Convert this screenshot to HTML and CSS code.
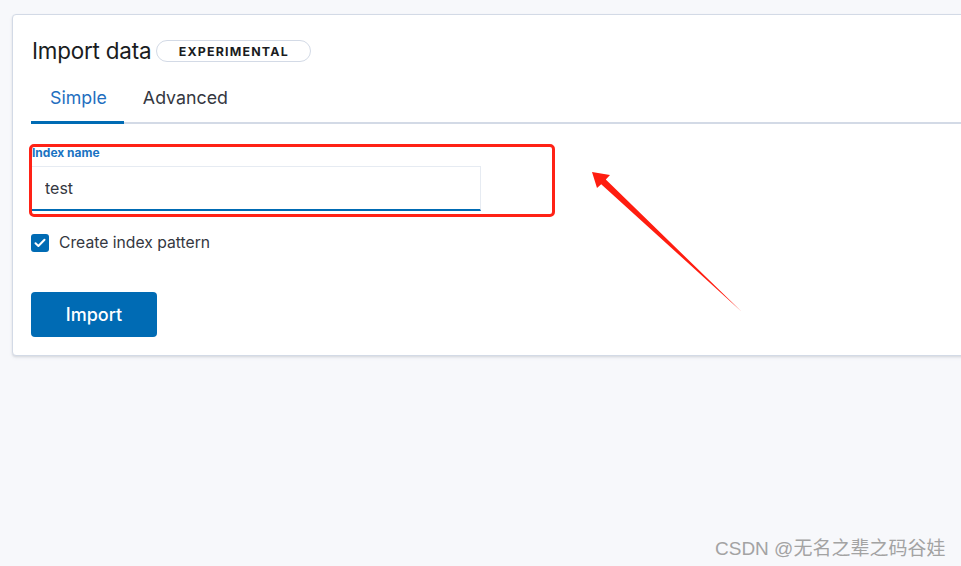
FILE: index.html
```html
<!DOCTYPE html>
<html lang="en">
<head>
<meta charset="utf-8">
<title>Import data</title>
<link rel="stylesheet" href="styles.css">
</head>
<body>
<div class="page">
  <section class="card">
    <header class="title-row">
      <h1 class="title">Import data</h1>
      <span class="badge">EXPERIMENTAL</span>
    </header>
    <nav class="tabs">
      <button class="tab active">Simple</button>
      <button class="tab">Advanced</button>
    </nav>
    <form class="form">
      <label class="field-label" for="index-name">Index name</label>
      <input id="index-name" class="field" type="text" value="test">
      <label class="check-row">
        <span class="checkbox">
          <svg width="12" height="10" viewBox="0 0 12 10"><path d="M1.5 5.2 4.4 8 10.5 1.8" fill="none" stroke="#fff" stroke-width="2" stroke-linecap="round" stroke-linejoin="round"/></svg>
        </span>
        <span class="check-text">Create index pattern</span>
      </label>
      <button type="button" class="import-btn">Import</button>
    </form>
  </section>
  <div class="highlight"></div>
  <svg class="arrow" width="961" height="566" viewBox="0 0 961 566">
    <polygon points="592,172 610,175 605.8,179.6 742,312 601.2,184.2 597,188" fill="#ff1d10"/>
  </svg>
  <div class="watermark">CSDN @无名之辈之码谷娃</div>
</div>
</body>
</html>
```

FILE: styles.css
```css
html, body {
  margin: 0;
  padding: 0;
}
body {
  background: #f7f8fb;
  font-family: Inter, "Noto Sans", sans-serif;
  overflow: hidden;
}
.page {
  position: relative;
  width: 961px;
  height: 566px;
  overflow: hidden;
}
.card {
  margin: 14px 0 0 12px;
  width: 1000px;
  background: #fff;
  border: 1px solid #d3dae6;
  border-radius: 4px;
  box-shadow: 0 1px 2px rgba(0,0,0,0.08), 0 2px 3px rgba(152,162,179,0.15);
  padding: 21px 0 18px 18px;
  box-sizing: border-box;
}
.title-row {
  display: flex;
  align-items: center;
  gap: 5px;
  height: 30px;
}
.title {
  margin: 0 0 0 1px;
  font-size: 22.4px;
  font-weight: 400;
  color: #1a1c21;
  letter-spacing: -0.2px;
  line-height: 30px;
}
.badge {
  display: inline-flex;
  align-items: center;
  justify-content: center;
  height: 20px;
  width: 153px;
  border: 1px solid #d3dae6;
  border-radius: 12px;
  font-size: 12.4px;
  font-weight: 700;
  letter-spacing: 1.2px;
  color: #1a1c21;
}
.tabs {
  display: flex;
  margin-top: 9px;
  border-bottom: 2px solid #d3dae6;
}
.tab {
  position: relative;
  background: none;
  border: 0;
  padding: 0 17px 3px 19px;
  height: 47px;
  font-family: Inter, "Noto Sans", sans-serif;
  font-size: 17.8px;
  color: #343741;
  cursor: pointer;
}
.tab.active {
  color: #1f6fbf;
}
.tab.active::after {
  content: "";
  position: absolute;
  left: 0;
  right: 0;
  bottom: -2px;
  height: 3px;
  background: #006bb4;
}
.form {
  display: flex;
  flex-direction: column;
  align-items: flex-start;
  padding-top: 21px;
}
.field-label {
  font-size: 12px;
  font-weight: 700;
  color: #1a73c2;
  line-height: 16px;
  margin-left: 1px;
}
.field {
  margin-top: 5px;
  width: 450px;
  height: 45px;
  box-sizing: border-box;
  border: 1px solid #e6ebf2;
  border-bottom: 2px solid #006bb4;
  background: #fff;
  padding: 0 13px;
  font-family: Inter, "Noto Sans", sans-serif;
  font-size: 16px;
  color: #343741;
  outline: none;
}
.check-row {
  display: flex;
  align-items: center;
  gap: 10px;
  margin-top: 22px;
}
.checkbox {
  display: flex;
  align-items: center;
  justify-content: center;
  width: 18px;
  height: 18px;
  background: #006bb4;
  border-radius: 3px;
}
.check-text {
  font-size: 15.7px;
  color: #343741;
}
.import-btn {
  margin-top: 40px;
  width: 126px;
  height: 45px;
  background: #006bb4;
  border: 0;
  border-radius: 4px;
  color: #fff;
  font-family: Inter, "Noto Sans", sans-serif;
  font-size: 18px;
  font-weight: 500;
}
.highlight {
  position: absolute;
  left: 29px;
  top: 144px;
  width: 526px;
  height: 73px;
  box-sizing: border-box;
  border: 3px solid #ff2216;
  border-radius: 5px;
}
.arrow {
  position: absolute;
  left: 0;
  top: 0;
}
.watermark {
  position: absolute;
  left: 715px;
  top: 533px;
  font-family: "Liberation Sans", "Noto Sans CJK SC", sans-serif;
  font-size: 19px;
  color: #a3a3a3;
  white-space: nowrap;
}
```
